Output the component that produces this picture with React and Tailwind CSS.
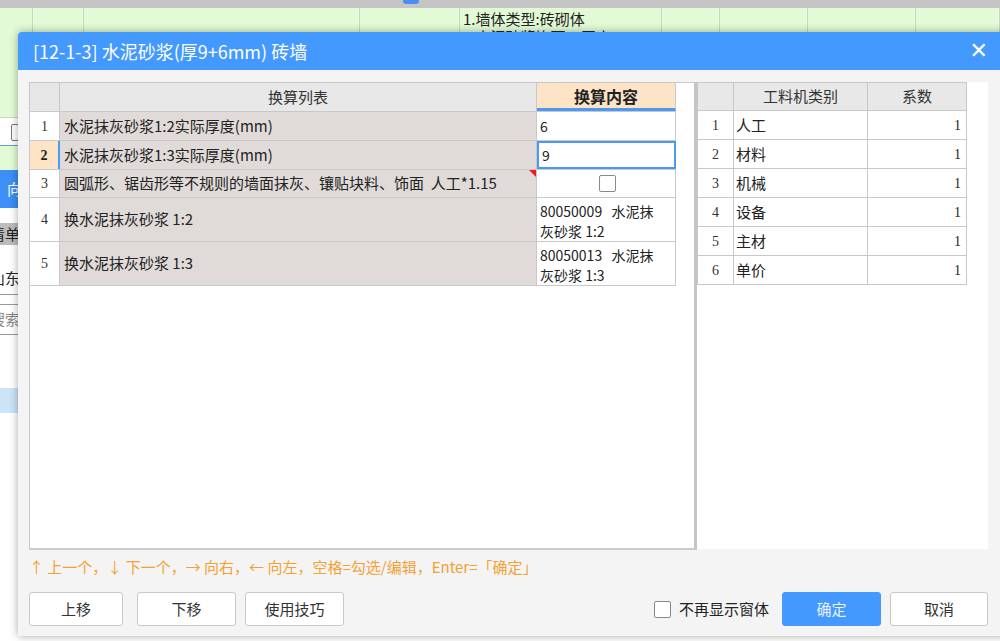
import React from "react";

const F = { fontFamily: '"Noto Sans CJK SC", "Noto Sans", sans-serif' };
const M = { fontFamily: '"Liberation Mono", "Noto Sans CJK SC", monospace' };

function BgColumns() {
  const cols = [33, 51, 276, 100, 202, 58, 88, 108, 84];
  return (
    <div className="flex h-full">
      {cols.map((w, i) => (
        <div key={i} className="h-full border-r border-[#c9d6c2] shrink-0" style={{ width: w }}>
          {i === 4 && (
            <div className="pl-[3px] pt-[2px] text-[15px] leading-[18px] text-[#222]" style={F}>
              <div>1.墙体类型:砖砌体</div>
              <div>2.大泥砂浆饰面、厚度</div>
            </div>
          )}
        </div>
      ))}
    </div>
  );
}

function LeftRow({ n, text, content, h, sel, tri, check, multi }) {
  return (
    <div className="flex w-[646px] border-b border-[#c8c8c8]" style={{ height: h }}>
      <div
        className={
          "w-[30px] shrink-0 border-r flex items-center justify-center text-[14px] " +
          (sel ? "bg-[#fde4c6] font-bold text-[#222] border-r-2 border-r-[#4a9af5]" : "bg-white text-[#333] border-[#c8c8c8]")
        }
        style={{ fontFamily: '"Liberation Serif", serif' }}
      >
        {n}
      </div>
      <div className="relative w-[477px] shrink-0 border-r border-[#c8c8c8] bg-[#e0dbd8] flex items-center pl-[4px] text-[15px] text-[#222] whitespace-pre" style={F}>
        {text}
        {tri && (
          <div className="absolute right-0 top-0 w-0 h-0 border-l-[7px] border-l-transparent border-t-[7px] border-t-[#ee1c1c]" />
        )}
      </div>
      <div
        className={
          "w-[139px] shrink-0 bg-white flex text-[14px] text-[#222] " +
          (sel ? "border-2 border-[#4a9af5] " : "border-r border-[#c8c8c8] ") +
          (multi ? "items-start pt-[3px] pl-[3px] leading-[20px]" : "items-center pl-[3px]") +
          (check ? " justify-center" : "")
        }
        style={F}
      >
        {check ? (
          <div className="w-[17px] h-[17px] border border-[#8a8a8a] rounded-[2px] bg-white" />
        ) : (
          content
        )}
      </div>
    </div>
  );
}

function RightRow({ n, name }) {
  return (
    <div className="flex h-[29px] border-b border-[#c8c8c8]">
      <div className="w-[36px] shrink-0 border-r border-[#c8c8c8] flex items-center justify-center text-[14px] text-[#333]" style={{ fontFamily: '"Liberation Serif", serif' }}>
        {n}
      </div>
      <div className="w-[134px] shrink-0 border-r border-[#c8c8c8] flex items-center pl-[2px] text-[15px] text-[#222]" style={F}>
        {name}
      </div>
      <div className="w-[99px] shrink-0 border-r border-[#c8c8c8] flex items-center justify-end pr-[5px] text-[14px] text-[#222]" style={{ fontFamily: '"Liberation Serif", serif' }}>
        1
      </div>
    </div>
  );
}

function Btn({ children, w, primary }) {
  return (
    <button
      className={
        "h-[34px] rounded-[3px] text-[15px] flex items-center justify-center " +
        (primary ? "bg-[#4499ff] text-[#eaf3ff] border border-[#4499ff]" : "bg-white text-[#333] border border-[#c9c9c9]")
      }
      style={{ ...F, width: w }}
    >
      {children}
    </button>
  );
}

export default function App() {
  return (
    <div className="relative w-[1000px] h-[641px] overflow-hidden bg-white" style={F}>
      {/* background app */}
      <div className="flex flex-col h-full">
        <div className="h-[8px] bg-[#c5c5c5] relative shrink-0">
          <div className="absolute left-[403px] top-0 w-[16px] h-[4px] rounded-b-[3px] bg-[#4a90f0]" />
        </div>
        <div className="h-[60px] bg-[#e2fad6] shrink-0">
          <BgColumns />
        </div>
        <div className="flex-1 flex">
          <div className="w-[18px] flex flex-col bg-white text-[15px] text-[#222]" style={F}>
            <div className="h-[50px] bg-[#e2fad6] border-b border-[#c9d6c2]" />
            <div className="h-[28px] bg-white border-b border-[#5aa0f0] relative">
              <div className="absolute left-[11px] top-[6px] w-[8px] h-[17px] border border-[#777] rounded-[2px]" />
            </div>
            <div className="h-[24px] bg-[#e2fad6]" />
            <div className="h-[38px] bg-[#3d8ef5] text-white flex items-center justify-end overflow-hidden whitespace-nowrap">
              <span className="mr-[-4px]">向</span>
            </div>
            <div className="h-[15px]" />
            <div className="h-[22px] bg-[#bcbcbc] flex items-center justify-end overflow-hidden whitespace-nowrap">
              <span className="mr-[-2px]">清单</span>
            </div>
            <div className="h-[18px]" />
            <div className="h-[32px] flex items-center justify-end overflow-hidden whitespace-nowrap border-b border-[#999]">
              <span className="mr-[-2px]">山东</span>
            </div>
            <div className="h-[10px] border-b border-[#999]" />
            <div className="h-[30px] flex items-center justify-end overflow-hidden whitespace-nowrap text-[#888] border-b border-[#999]">
              <span className="mr-[-2px]">搜索</span>
            </div>
            <div className="h-[53px]" />
            <div className="h-[25px] bg-[#cce4f8]" />
            <div className="flex-1" />
          </div>
          <div className="flex-1" />
        </div>
      </div>

      {/* dialog */}
      <div className="absolute left-[18px] top-[32px] w-[990px] h-[604px] bg-[#f4f4f4] rounded-tl-[4px] shadow-[0_0_8px_rgba(0,0,0,0.35)] flex flex-col">
        <div className="h-[38px] bg-[#4499ff] rounded-tl-[4px] flex items-center justify-between pl-[15px] pr-[20px] shrink-0">
          <span className="text-[18px] text-white" style={F}>[12-1-3] 水泥砂浆(厚9+6mm) 砖墙</span>
          <span className="text-white text-[22px] font-bold leading-none" style={{ fontFamily: '"DejaVu Sans", sans-serif' }}>✕</span>
        </div>

        <div className="flex pl-[11px] pt-[12px] shrink-0">
          {/* left table panel */}
          <div className="w-[668px] h-[468px] bg-white border-l border-t border-[#c8c8c8] border-r-[3px] border-r-[#c4c4c4] border-b-2 border-b-[#cbcbcb]">
            <div className="flex w-[646px] h-[29px] border-b border-[#c8c8c8]">
              <div className="w-[30px] shrink-0 bg-[#e6e6e6] border-r border-[#c8c8c8]" />
              <div className="w-[477px] shrink-0 bg-[#e8e8e8] border-r border-[#c8c8c8] flex items-center justify-center text-[15px] text-[#333]">换算列表</div>
              <div className="w-[139px] shrink-0 bg-[#fde4c6] border-r border-[#c8c8c8] border-b-[3px] border-b-[#4a9af5] flex items-center justify-center text-[16px] font-bold text-[#222]">换算内容</div>
            </div>
            <LeftRow n="1" text="水泥抹灰砂浆1:2实际厚度(mm)" content="6" h={29} />
            <LeftRow n="2" text="水泥抹灰砂浆1:3实际厚度(mm)" content="9" h={29} sel />
            <LeftRow n="3" text="圆弧形、锯齿形等不规则的墙面抹灰、镶贴块料、饰面  人工*1.15" h={28} tri check />
            <LeftRow n="4" text="换水泥抹灰砂浆 1:2" content={<span>80050009&nbsp;&nbsp;&nbsp;水泥抹<br />灰砂浆 1:2</span>} h={44} multi />
            <LeftRow n="5" text="换水泥抹灰砂浆 1:3" content={<span>80050013&nbsp;&nbsp;&nbsp;水泥抹<br />灰砂浆 1:3</span>} h={44} multi />
          </div>

          {/* right table panel */}
          <div className="w-[291px] h-[467px] bg-white">
            <div className="w-[270px] border-l border-t border-[#c8c8c8]">
              <div className="flex h-[28px] border-b border-[#c8c8c8] bg-[#e8e8e8]">
                <div className="w-[36px] shrink-0 border-r border-[#c8c8c8]" />
                <div className="w-[134px] shrink-0 border-r border-[#c8c8c8] flex items-center justify-center text-[15px] text-[#333]">工料机类别</div>
                <div className="w-[99px] shrink-0 border-r border-[#c8c8c8] flex items-center justify-center text-[15px] text-[#333]">系数</div>
              </div>
              {["人工", "材料", "机械", "设备", "主材", "单价"].map((n, i) => (
                <RightRow key={n} n={i + 1} name={n} />
              ))}
            </div>
          </div>
        </div>

        <div className="pl-[11px] pt-[7px] h-[28px] text-[15px] text-[#f5a033] flex items-center whitespace-pre" style={F}>
          ↑ 上一个，↓ 下一个，→ 向右，← 向左，空格=勾选/编辑，Enter=「确定」
        </div>

        <div className="flex items-center pl-[11px] pr-[20px] pt-[14px]">
          <div className="flex">
            <Btn w={94}>上移</Btn>
            <div className="w-[14px]" />
            <Btn w={99}>下移</Btn>
            <div className="w-[9px]" />
            <Btn w={99}>使用技巧</Btn>
          </div>
          <div className="flex-1" />
          <div className="flex items-center gap-[8px] mr-[13px]">
            <div className="w-[17px] h-[17px] border border-[#888] rounded-[2px] bg-white" />
            <span className="text-[15px] text-[#222]">不再显示窗体</span>
          </div>
          <div className="flex gap-[9px]">
            <Btn w={99} primary>确定</Btn>
            <Btn w={98}>取消</Btn>
          </div>
        </div>
      </div>
    </div>
  );
}
